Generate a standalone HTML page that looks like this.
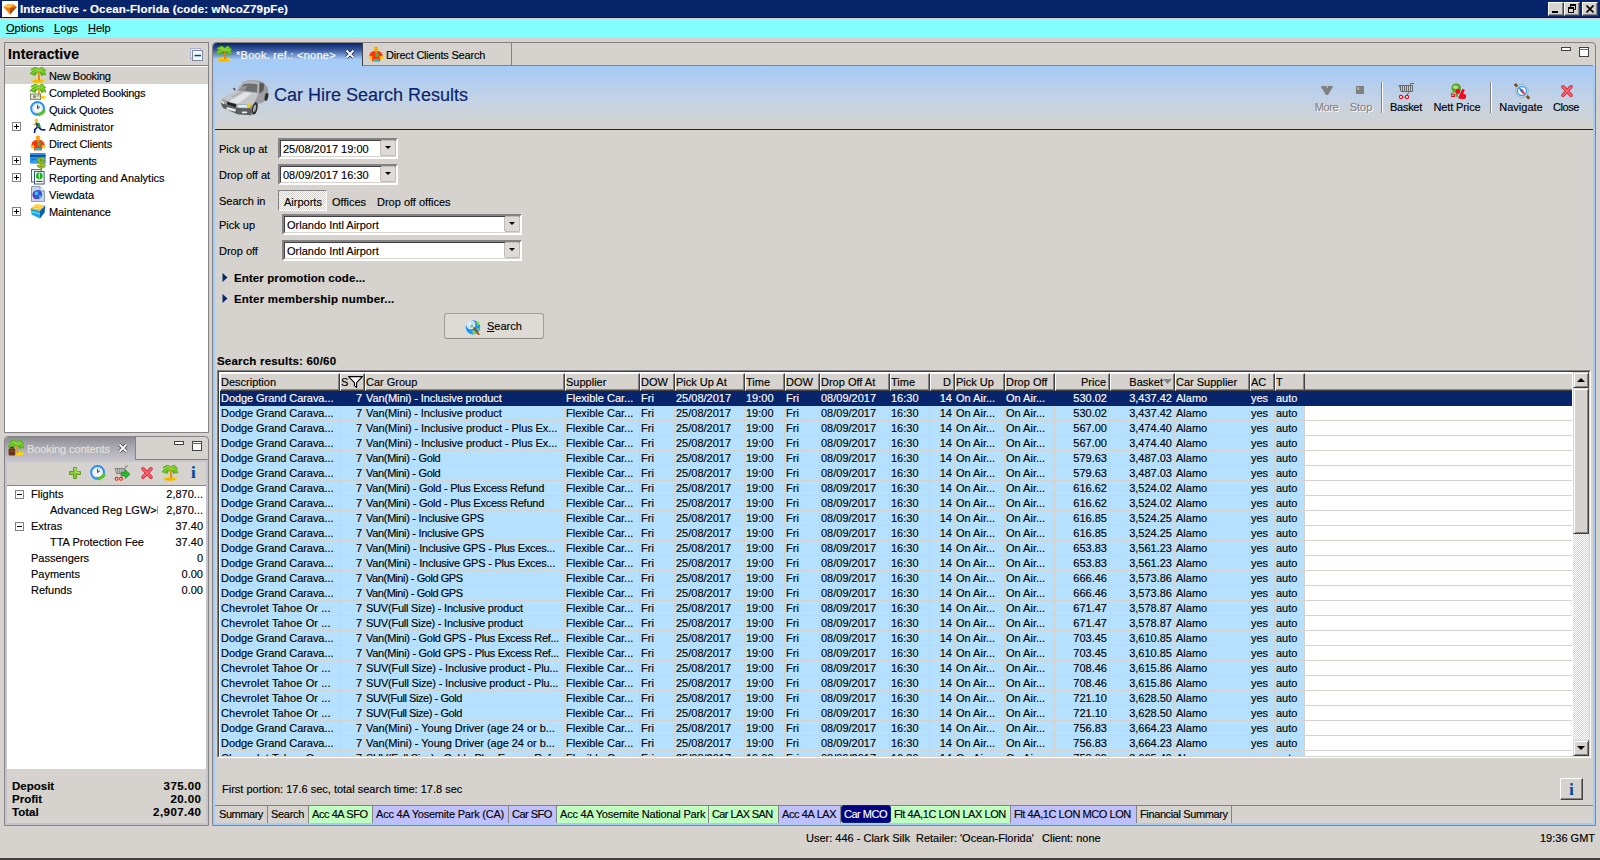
<!DOCTYPE html>
<html><head><meta charset="utf-8"><title>Interactive - Ocean-Florida</title>
<style>
*{box-sizing:border-box;margin:0;padding:0}
html,body{width:1600px;height:860px;overflow:hidden}
body{background:#d6d3ce;font-family:"Liberation Sans",sans-serif;font-size:11px;color:#000;-webkit-text-stroke:.15px;position:relative;line-height:13px}
div,span{position:absolute}
div,span{white-space:nowrap}
#titlebar{left:0;top:0;width:1600px;height:18px;background:#08246b;border-bottom:1px solid #00145a;color:#fff;font-weight:bold;font-size:11.5px;letter-spacing:.16px}
#menubar{left:0;top:19px;width:1600px;height:18px;background:#84ffff}
u{text-decoration:underline}
/* left top panel */
#lp{left:4px;top:42px;width:205px;height:391px;border:1px solid #848284;background:#fff}
#lphead{left:0;top:0;width:203px;height:23px;background:#d6d3ce;border-bottom:1px solid #848284}
.ti{left:0;width:203px;height:17px}
/* bottom left panel */
#bp{left:4px;top:436px;width:205px;height:390px;border:1px solid #848284;border-radius:4px 4px 0 0;background:#d6d3ce}
/* main */
#mp{left:212px;top:42px;width:1384px;height:784px;border:1px solid #848284;border-radius:4px 4px 0 0;background:#d6d3ce}
/* table */
#tbl{left:217px;top:370px;width:1374px;height:388px;border:1px solid;border-color:#848284 #fff #fff #848284;background:#fff;overflow:hidden}
#tin{left:0;top:0;width:1372px;height:386px;border:1px solid;border-color:#424142 #d6d3ce #d6d3ce #424142;overflow:hidden}
.th{top:-1px;height:18px;background:#d6d3ce;border:1px solid;border-color:#fff #424142 #424142 #fff;box-shadow:inset -1px -1px 0 #848284;padding:2px 2px 0 0;line-height:13px;overflow:hidden}
.th.r,.c.r{text-align:right;padding-right:3px}
.tr{left:0;width:1352px;height:15px;border-bottom:1px solid #d6d3ce;background:#fff}
.tr .c{top:0;height:14px;background:#b5e1ff;border-right:1px solid #d3d1cd;padding:0 2px 0 1px;line-height:14px;overflow:hidden}
.tr.sel{background:#08246b;border-bottom-color:#08246b}
.tr.sel .c{background:#08246b;color:#fff;border-right-color:#08246b}
#sb{left:1354px;top:0;width:16px;height:384px;background:repeating-conic-gradient(#fff 0% 25%,#d6d3ce 0% 50%) 0 0/2px 2px}
.sbb{left:0;width:16px;height:16px;background:#d6d3ce;border:1px solid;border-color:#d6d3ce #424142 #424142 #d6d3ce;box-shadow:inset 1px 1px 0 #fff,inset -1px -1px 0 #848284}
.sbb b{position:absolute;left:3px;border:4px solid transparent}
#thumb{left:0;top:16px;width:16px;height:146px;background:#d6d3ce;border:1px solid;border-color:#d6d3ce #424142 #424142 #d6d3ce;box-shadow:inset 1px 1px 0 #fff,inset -1px -1px 0 #848284}
i{position:absolute;display:block;font-style:normal}
svg.ic{position:absolute;width:16px;height:16px;top:0;overflow:visible}
.ti .tx{left:44px;top:3px}
.pm{left:7px;top:4px;width:9px;height:9px;border:1px solid #848284;background:#fff}
.pm:before{content:"";position:absolute;left:1px;top:3px;width:5px;height:1px;background:#000}
.pm.p:after{content:"";position:absolute;left:3px;top:1px;width:1px;height:5px;background:#000}
#bptab{left:0;top:0;width:131px;height:23px;border-radius:4px 0 0 0;background:linear-gradient(#8c8b95,#a5a3ab 35%,#c5c3cb);border-right:1px solid #848284}
#bptool{left:2px;top:25px;width:199px;height:24px;background:#d6d3ce;border-bottom:1px solid #848284}
#bptree{left:2px;top:49px;width:199px;height:283px;background:#fff}
.bi{left:0;width:199px;height:16px}
.bi span{top:1px}
.v{right:3px;left:auto !important;text-align:right}
#bptot{left:0;top:333px;width:203px;height:55px;font-weight:bold;font-size:11.5px}
#bptot .v{right:7px;letter-spacing:.45px;margin-right:-.45px}
#bptot span{margin-top:1px}
#tab1{left:0;top:0;width:150px;height:23px;border-radius:4px 0 0 0;background:linear-gradient(#08246b,#37579d 30%,#a5cbf7 72%);border-right:1px solid #424142}
#tab2{left:150px;top:0;width:149px;height:23px;border-right:1px solid #848284}
#frame{left:0;top:23px;width:1382px;height:759px;border:2px solid #a5cbf7;border-top:0}
#hdr{left:2px;top:23px;width:1378px;height:63px;background:linear-gradient(#a5cbf7,#c4d2e4 55%,#d6d3ce)}
.tb{top:16px;height:34px}
.tb span{left:0;right:0;top:19px;text-align:center}
.tb.dis span{color:#848284;text-shadow:1px 1px 0 #fff}
.sep{top:16px;width:2px;height:31px;background:#848284;border-right:1px solid #fff}
.lb{left:6px}
.fld{border:2px solid;border-color:#848284 #fff #fff #848284;background:#fff}
.fld:before{content:"";position:absolute;left:0;top:0;right:0;bottom:0;border:1px solid;border-color:#424142 #d6d3ce #d6d3ce #424142}
.fld span{left:3px;top:3px}
.dd{right:0;top:0;width:16px;height:16px;background:#dedad6;border:1px solid #c0bcb6;border-radius:2px}
.dd:after{content:"";position:absolute;left:4px;top:5px;border:3px solid transparent;border-top:3px solid #000;border-bottom:0}
#tog{left:65px;top:147px;width:49px;height:21px;background:repeating-conic-gradient(#fff 0% 25%,#d6d3ce 0% 50%) 0 0/2px 2px;border:1px solid;border-color:#848284 #fff #fff #848284}
#tog span{left:5px;top:5px}
.bl{font-weight:bold;font-size:11.5px;letter-spacing:.2px}
#sbtn{left:231px;top:270px;width:100px;height:26px;background:#dedad6;border:1px solid #a29e9a;border-bottom-color:#8e8a86;border-radius:3px}
#ibtn{left:1347px;top:735px;width:23px;height:22px;background:#d6d3ce;border:1px solid;border-color:#fff #424142 #424142 #fff;box-shadow:inset -1px -1px 0 #848284}
#ibtn span{left:0;right:0;top:2px;text-align:center;font-family:"Liberation Serif",serif;font-weight:bold;font-size:16px;line-height:18px;color:#00489c}
#btabs{left:0;top:763px;width:1383px;height:17px}
.bt{top:0;height:17px;padding:2px 0 0 3px;overflow:hidden;border-right:1px solid #848284;line-height:13px}
.bt.g{background:#c0ffc0}.bt.p{background:#c0c0ff}
.bt.s{background:#000080;color:#fff;top:-1px;height:18px;padding-top:2px;border-radius:3px;border:1px solid #08246b;padding-left:2px}
.wb{top:2px;width:16px;height:14px;background:#d6d3ce;border:1px solid;border-color:#fff #424142 #424142 #fff;box-shadow:inset -1px -1px 0 #848284}
#bpframe{left:0;top:23px;width:203px;height:365px;border:2px solid #c5c3cb}
.tb svg.d1{top:1px}

</style></head><body >
<svg width="0" height="0" style="position:absolute"><defs>
<symbol id="i-palm" viewBox="0 0 16 16">
 <ellipse cx="8" cy="13.6" rx="7" ry="2" fill="#ffd400"/><ellipse cx="8" cy="14.3" rx="5.5" ry="1.2" fill="#f4b400"/>
 <path d="M8 4C7.6 7 8.4 10 8.3 13L10 13C9.8 10 9.2 7 9.6 4z" fill="#e89400"/><path d="M8.3 7h1.2M8.4 9.5h1.3M8.5 11.7h1.4" stroke="#c06000" stroke-width=".8"/>
 <g fill="none" stroke-linecap="round"><path d="M8.6 3.6Q4 2.4 .8 6.8M8.6 3.6Q5 .6 1.8 2.6M8.6 3.6Q7 .4 4.6 .8M8.6 3.6Q10.4 .4 12.6 1M8.6 3.6Q12.6 1 15 3.6M8.6 3.6Q13.6 3 15.2 7.6M8.6 3.6Q6 4.6 4.8 8M8.6 3.6Q11 4.6 12 8.2M8.6 3.6Q5 3 2.8 7.4M8.6 3.6Q12 3.4 13.6 7" stroke="#58b218" stroke-width="1.9"/><path d="M8.6 3.4Q5 1.4 2.4 3M8.6 3.4Q7.4 1.2 5.2 1.2M8.6 3.4Q10.4 1.2 12.4 1.6M8.6 3.4Q12 2 14.4 4M8.4 3.8Q5 3.6 2 6.4M8.8 3.8Q12.4 3.8 14.4 6.6" stroke="#9ade3c" stroke-width="1"/></g>
</symbol>
<symbol id="i-palmcash" viewBox="0 0 16 16">
 <ellipse cx="12" cy="13.2" rx="3.6" ry="1.6" fill="#ffd400"/>
 <path d="M8 4C7.6 6 8.2 8 8.3 10L10 10C9.8 8 9.2 6 9.6 4z" fill="#e89400"/>
 <g fill="none" stroke-linecap="round"><path d="M8.6 3.6Q4 2.4 .8 6.8M8.6 3.6Q5 .6 1.8 2.6M8.6 3.6Q7 .4 4.6 .8M8.6 3.6Q10.4 .4 12.6 1M8.6 3.6Q12.6 1 15 3.6M8.6 3.6Q13.6 3 15.2 7.6M8.6 3.6Q6 4.6 4.8 8M8.6 3.6Q11 4.6 12 8.2M8.6 3.6Q5 3 2.8 7.4M8.6 3.6Q12 3.4 13.6 7" stroke="#58b218" stroke-width="1.9"/><path d="M8.6 3.4Q5 1.4 2.4 3M8.6 3.4Q7.4 1.2 5.2 1.2M8.6 3.4Q10.4 1.2 12.4 1.6M8.6 3.4Q12 2 14.4 4M8.4 3.8Q5 3.6 2 6.4M8.8 3.8Q12.4 3.8 14.4 6.6" stroke="#9ade3c" stroke-width="1"/></g>
 <rect x=".5" y="10" width="10" height="5.4" fill="#e4e6cc" stroke="#7c8068"/><circle cx="4.6" cy="12.7" r="1.6" fill="#8c9078"/><rect x="7" y="11.4" width="2.4" height="1" fill="#8c9078"/>
</symbol>
<symbol id="i-clock" viewBox="0 0 16 16">
 <circle cx="7.6" cy="7.4" r="6.4" fill="#fff" stroke="#1e90ff" stroke-width="2"/><circle cx="7.6" cy="7.4" r="5" fill="#f4f6fa" stroke="#a0b4d0" stroke-width=".6"/>
 <path d="M7.6 3.8V7.6L10 5.6" stroke="#303848" stroke-width="1" fill="none"/>
 <path d="M5.4 11.6C8 12.8 12 11.6 13.4 8L15.6 9.6C15 13 12 14.6 9.4 14.4L9.6 16 5.4 11.6z" fill="#52c02a"/>
</symbol>
<symbol id="i-run" viewBox="0 0 16 16">
 <circle cx="6.4" cy="2.4" r="1.8" fill="#f4c430"/>
 <path d="M5.6 4.2L9.6 5 11 9.4 8.6 10 6 8z" fill="#3c9c30"/><path d="M5.4 4.6L7.6 5.2 8.2 9 6 8z" fill="#28389c"/>
 <path d="M3.4 6.6L6 6" stroke="#f0a020" stroke-width="1.4"/>
 <path d="M7.4 9L4.8 11.6 4.6 15M8.6 9.4L11.4 11.6 15.4 11.8" stroke="#101c8c" stroke-width="1.7" fill="none"/>
</symbol>
<symbol id="i-client" viewBox="0 0 16 16">
 <ellipse cx="8" cy="2.8" rx="2.4" ry="2.4" fill="#ffd020"/><path d="M5.8 2.2Q8 -.6 10.2 2.2" fill="#ff9a00"/><path d="M6.4 3.4h3.2" stroke="#e07000" stroke-width=".8"/>
 <ellipse cx="8" cy="9.6" rx="6.6" ry="4.8" fill="#ff3208"/><rect x="4" y="11" width="8" height="4.4" fill="#ff3208"/>
 <circle cx="2.6" cy="11.6" r="1.9" fill="#ffc414"/><circle cx="13.4" cy="11.6" r="1.9" fill="#ffc414"/>
 <rect x="7.4" y="7.4" width="3.4" height="2.4" fill="#30c848"/><path d="M7 10.2h2.4v1.6" stroke="#30c848" stroke-width="1" fill="none"/><rect x="5" y="13" width="6" height="1.9" fill="#18c8c0"/>
 <path d="M6.6 5.4L8 6.6 9.4 5.4" stroke="#ffd020" stroke-width="1" fill="none"/>
</symbol>
<symbol id="i-pay" viewBox="0 0 16 16" overflow="visible">
 <rect x="0" y="1" width="15.6" height="10.6" rx="1" fill="#2a90e8"/><rect x="0" y="3" width="15.6" height="1.8" fill="#0c4890"/><path d="M0 11.6L8 5.4H15.6V11.6z" fill="#48a8f4" opacity=".6"/><rect x="1.6" y="6.8" width="4.4" height="1.1" fill="#1870c8"/>
 <text x="11.2" y="15.6" font-family="Liberation Sans,sans-serif" font-weight="bold" font-size="15" text-anchor="middle" fill="#a8d020" stroke="#6c9c10" stroke-width=".7">$</text>
</symbol>
<symbol id="i-report" viewBox="0 0 16 16">
 <rect x="1.5" y=".6" width="9.6" height="12.4" fill="#f0f4f8" stroke="#4a6880"/><rect x="4.5" y="2.6" width="9.6" height="12.4" fill="#fff" stroke="#385870"/>
 <circle cx="9.3" cy="7" r="3.4" fill="#18b418"/><path d="M9.3 4.6v3.2" stroke="#fff" stroke-width="1.2"/><circle cx="9.3" cy="9" r=".7" fill="#fff"/>
 <path d="M6.2 12.4h6.4" stroke="#502020" stroke-width="1"/>
</symbol>
<symbol id="i-globe" viewBox="0 0 16 16">
 <path d="M1.5 .6H10L14.4 5V15.4H1.5z" fill="#ccd8ec" stroke="#8898b4"/><path d="M10 .6V5h4.4" fill="#eef2fa" stroke="#8898b4"/>
 <circle cx="7.6" cy="8.6" r="4.6" fill="#3a50e0"/><path d="M5 6.4C6.4 5 8 5.6 8 7 9 8 7.4 9.4 6.4 9 5.6 10 4 8 5 6.4zM9 9.6C10.6 8.6 11.6 9.6 10.6 11.4 9.6 12.6 8.4 11 9 9.6z" fill="#30d8c8"/><path d="M3.6 6.6A4.6 4.6 0 0 0 6 13" stroke="#7020a0" stroke-width="1.2" fill="none"/>
</symbol>
<symbol id="i-box" viewBox="0 0 16 16">
 <path d="M.6 5.6L6.6 1 15.4 2.6 9.6 8z" fill="#ffb400"/><path d="M2.6 4.8L11.6 6.4M4.6 3.2L13.4 4.8M6.4 1.8L14.8 3.4" stroke="#fff088" stroke-width=".9"/>
 <path d="M.6 5.6L9.6 8 10 15.6 1.6 11.6z" fill="#1ea0e0"/><path d="M9.6 8L15.4 2.6 14.6 9.6 10 15.6z" fill="#0c60b0"/>
 <path d="M1.4 8.6L9.6 11" stroke="#60e8f8" stroke-width="1.2"/>
</symbol>
<symbol id="i-palmbag" viewBox="0 0 16 16">
 <ellipse cx="11.6" cy="13.6" rx="4" ry="1.8" fill="#ffd400"/>
 <path d="M8.4 4C8 7 8.6 10 8.6 13L10.2 13C10 10 9.6 7 10 4z" fill="#e89400"/>
 <g fill="none" stroke-linecap="round"><path d="M8.6 3.6Q4 2.4 .8 6.8M8.6 3.6Q5 .6 1.8 2.6M8.6 3.6Q7 .4 4.6 .8M8.6 3.6Q10.4 .4 12.6 1M8.6 3.6Q12.6 1 15 3.6M8.6 3.6Q13.6 3 15.2 7.6M8.6 3.6Q6 4.6 4.8 8M8.6 3.6Q11 4.6 12 8.2M8.6 3.6Q5 3 2.8 7.4M8.6 3.6Q12 3.4 13.6 7" stroke="#58b218" stroke-width="1.9"/><path d="M8.6 3.4Q5 1.4 2.4 3M8.6 3.4Q7.4 1.2 5.2 1.2M8.6 3.4Q10.4 1.2 12.4 1.6M8.6 3.4Q12 2 14.4 4M8.4 3.8Q5 3.6 2 6.4M8.8 3.8Q12.4 3.8 14.4 6.6" stroke="#9ade3c" stroke-width="1"/></g>
 <rect x=".6" y="8.6" width="6.6" height="6.8" rx="1" fill="#6a3418"/><path d="M2.6 8.6V7.4h2.6v1.2" stroke="#3a1c0c" fill="none" stroke-width=".9"/><rect x=".6" y="10.4" width="6.6" height="1" fill="#8a4c28"/>
</symbol>
<symbol id="i-plus" viewBox="0 0 16 16">
 <path d="M6.5 2.5h3v4h4v3h-4v4h-3v-4h-4v-3h4z" fill="#8cc63c" stroke="#5e9a22" stroke-width="1" stroke-linejoin="round"/><path d="M7.2 3.4h1.6v3.8h3.8" stroke="#c8ec80" stroke-width=".9" fill="none"/>
</symbol>
<symbol id="i-x" viewBox="0 0 16 16">
 <path d="M4 3.8L12 12.2M12 3.8L4 12.2" stroke="#d8283a" stroke-width="3.6" stroke-linecap="round"/><path d="M4 3.8L12 12.2M12 3.8L4 12.2" stroke="#f46872" stroke-width="1.8" stroke-linecap="round"/>
</symbol>
<symbol id="i-cart" viewBox="0 0 16 16" overflow="visible">
 <path d="M12.5 3.5V1.5H16M.5 3.5H15M1.5 3.5L3 9.5H14.5V3.5M11.5 9.5L9.5 12V13" stroke="#6a6a6a" fill="none" stroke-width="1"/>
 <path d="M2.5 3.5v3.6M4.5 3.5v6M6.5 3.5v6M8.5 3.5v6M10.5 3.5v6M12.5 3.5v6" stroke="#6a6a6a" stroke-width="1"/>
 <path d="M4.6 15H7.4" stroke="#5a9a9a" stroke-width="1"/>
 <circle cx="3" cy="15" r="1.6" fill="#f4ffff" stroke="#f00010" stroke-width="1.1"/><circle cx="9" cy="15" r="1.6" fill="#f4ffff" stroke="#f00010" stroke-width="1.1"/>
</symbol>
<symbol id="i-cartgo" viewBox="0 0 16 16">
 <path d="M.6 3.6H11L12 1h2" stroke="#808080" fill="none" stroke-width="1"/><path d="M1.4 3.6L2.4 8.6H10L11 3.6" stroke="#808080" fill="none" stroke-width="1"/>
 <path d="M3.6 3.6v5M5.4 3.6v5M7.2 3.6v5M9 3.6v5" stroke="#808080" stroke-width=".9"/>
 <circle cx="2.6" cy="13.8" r="1.4" fill="#fff" stroke="#f01010" stroke-width="1.1"/><circle cx="7" cy="13.8" r="1.4" fill="#fff" stroke="#f01010" stroke-width="1.1"/>
 <path d="M7 7.4h4.4V4.8L16 9.2 11.4 13.6V11H7z" fill="#20c020" stroke="#108010" stroke-width=".6"/>
</symbol>
<symbol id="i-nett" viewBox="0 0 16 16" overflow="visible">
 <circle cx="6.2" cy="5.2" r="4.8" fill="#5aa428"/><ellipse cx="5.6" cy="4.2" rx="2.8" ry="1.8" fill="#b4dc8c"/><path d="M5.4 8L8.6 9 7.6 14.6 5.6 13z" fill="#5aa428"/>
 <path d="M.6 10.4L4 9.8" stroke="#5aa428" stroke-width="1.2"/>
 <rect x="1" y="11.2" width="4" height="2.8" fill="#f00818"/><rect x="1.8" y="12.1" width="2" height=".9" fill="#ffd8d8"/>
 <circle cx="8" cy="8.4" r="2.3" fill="#f00818"/><circle cx="13.4" cy="13.4" r="2.7" fill="#f00818"/><path d="M13.6 6.4L9.4 15.6" stroke="#f00818" stroke-width="2.8"/>
 <circle cx="8" cy="8.4" r=".7" fill="#c04040"/><circle cx="13.4" cy="13.4" r=".8" fill="#c04040"/>
</symbol>
<symbol id="i-compass" viewBox="0 0 16 16" overflow="visible">
 <path d="M.8 1L3.4 3.6M12.8 13L15.2 15.6" stroke="#7a4a20" stroke-width="2.6"/>
 <circle cx="8" cy="8" r="6.3" fill="#f0f4f8" stroke="#98a8b8" stroke-width="1"/><circle cx="8" cy="8" r="4.6" fill="#f8fcff" stroke="#38a4f0" stroke-width="1.5"/>
 <path d="M4.6 4.2L9.4 7 7 9.2z" fill="#2868d8"/><path d="M11.6 12L7 9.2 9.4 7z" fill="#f02828"/>
</symbol>
<symbol id="i-more" viewBox="0 0 16 16"><path d="M2.4 4H13.6V5.6L9 13H7L2.4 5.6z" fill="#808080"/><rect x="7.6" y="4.4" width="1.4" height="1.2" fill="#d8d8d8"/></symbol>
<symbol id="i-stop" viewBox="0 0 16 16"><rect x="4" y="4" width="8" height="8" fill="#808080"/><rect x="5.6" y="5.4" width="1.2" height="2.4" fill="#d8d8d8"/></symbol>
<symbol id="i-search" viewBox="0 0 16 16">
 <circle cx="8" cy="8.4" r="7.2" fill="#1e96f4"/><path d="M11 2.4L13.6 3 14.6 6 12.6 6.6zM7 12L10 11.4 11 14.4 8 15.4zM12 9L14.6 9.6 13 12z" fill="#7ce030"/>
 <circle cx="5.8" cy="5.8" r="3.9" fill="#bfe4ee" stroke="#e4e8f0" stroke-width="1.3"/><circle cx="5.2" cy="5.4" r="1.5" fill="#fff"/><circle cx="6.6" cy="6.8" r="1.6" fill="#58b070" opacity=".6"/>
 <path d="M9 9L13.8 15.4" stroke="#a05010" stroke-width="1.7" stroke-linecap="round"/>
</symbol>
<symbol id="i-car" viewBox="0 0 48 36">
 <path d="M16 11L22 2.4C28 .4 36 .8 41 2.4L46 8 46.6 15 42 22 36 24 33 33 30 34.6 17 33.6 3 27.6 .6 22.6 2 19z" fill="#9c9ea0"/>
 <path d="M2 19L16 11 37 13.6 32 24.6 17 23.6z" fill="#c4c6c8"/><path d="M8 21.6L24 12.4 31 13.2 17 23.6z" fill="#e2e4e6"/><path d="M11 16.6L19 11.6 22.6 12 12.6 18z" fill="#b0b2b4"/>
 <path d="M16 11L22 2.4C28 1 34 1.6 38 3L37 13.6z" fill="#b4b6b8"/><path d="M18 10.6L22.6 4.6C27 3.6 32 4 36 5L35.4 12.6z" fill="#6c6e70"/><path d="M18 10.6L21 6.6 26 6.2 24 11.2z" fill="#909294"/>
 <path d="M38 3L42.6 4.6 41.6 11 37.6 13.6z" fill="#58595b"/>
 <path d="M.6 22.6L17 27.6 30.6 28 30 34.6 17 33.6 3 27.6z" fill="#5a5c5e"/><rect x="6.6" y="26.6" width="9" height="2.6" fill="#e8e8e8" transform="rotate(14 6.6 26.6)"/><rect x="21" y="31" width="5" height="1.6" fill="#f0f0f0"/>
 <path d="M7 21.6L15.6 24 15 27 6.6 24z" fill="#202224"/>
 <path d="M17 24.4L26.6 24.6 26 27.4 17 27z" fill="#d4ecff"/><path d="M26.6 24.2L29.6 24 29 27.2 26 27.4z" fill="#f4d000"/><path d="M1.4 20.6L4 21.6 4 24 1 22.6z" fill="#cfe4f4"/><path d="M1.2 20L2.4 20.4 2.2 22 1 21.6z" fill="#f4d000"/>
 <ellipse cx="33.4" cy="28" rx="2.6" ry="6" fill="#2c2e30" transform="rotate(12 33.4 28)"/><ellipse cx="33.2" cy="28" rx="1.3" ry="3.6" fill="#a8aaac" transform="rotate(12 33.2 28)"/>
 <ellipse cx="44.6" cy="17" rx="1.6" ry="4" fill="#2c2e30" transform="rotate(12 44.6 17)"/>
 <path d="M13 8.6L14.6 10.4" stroke="#303234" stroke-width="1.4"/>
</symbol>
<symbol id="i-gem" viewBox="0 0 16 16"><rect width="16" height="16" fill="#fff"/><path d="M1.4 6L5 3.6H11.6L14.8 6 8 13.4z" fill="#f08000"/><path d="M1.4 6L5 3.6H11.6L8 7z" fill="#ffc040"/><path d="M8 7L14.8 6 8 13.4z" fill="#b84800"/></symbol>
</defs></svg>

<div id="titlebar"><svg class="ic" style="left:2px;top:1px"><use href="#i-gem"/></svg><span style="left:20px;top:3px">Interactive - Ocean-Florida (code: wNcoZ79pFe)</span>
 <i class="wb" style="left:1548px"><i style="left:3px;top:8px;width:6px;height:2px;background:#000"></i></i>
 <i class="wb" style="left:1564px"><svg style="position:absolute;left:3px;top:1px" width="9" height="10" viewBox="0 0 9 10"><path d="M2.5 3V1H7.5V5.5H6" fill="none" stroke="#000"/><path d="M2 1H8" stroke="#000" stroke-width="2"/><rect x=".5" y="4" width="5" height="4.5" fill="none" stroke="#000"/><path d="M0 4H6" stroke="#000" stroke-width="2"/></svg></i>
 <i class="wb" style="left:1582px"><svg style="position:absolute;left:3px;top:2px" width="8" height="8" viewBox="0 0 8 8"><path d="M.5 .5L7.5 7.5M7.5 .5L.5 7.5" stroke="#000" stroke-width="1.6"/></svg></i>
</div>
<div id="menubar" ><span style="left:6px;top:3px"><u>O</u>ptions</span><span style="left:54px;top:3px"><u>L</u>ogs</span><span style="left:88px;top:3px"><u>H</u>elp</span></div>

<div id="lp">
 <div id="lphead"><span style="left:3px;top:4px;font-size:14px;font-weight:bold;line-height:15px;letter-spacing:.1px">Interactive</span>
  <svg style="position:absolute;left:185px;top:5px" width="14" height="14" viewBox="0 0 14 14"><rect x=".5" y=".5" width="10" height="10" fill="#d8f0ff" stroke="#a8b4d0"/><rect x="2.5" y="2.5" width="10" height="10" fill="#f0faff" stroke="#8088a8"/><rect x="4.5" y="6.8" width="6.5" height="1.5" fill="#104080"/></svg>
 </div>
 <div class="ti" style="top:24px;background:#d6d3ce"><svg class="ic" style="left:25px"><use href="#i-palm"/></svg><span class="tx" style="letter-spacing:-0.3px">New Booking</span></div>
 <div class="ti" style="top:41px"><svg class="ic" style="left:25px"><use href="#i-palmcash"/></svg><span class="tx" style="letter-spacing:-0.3px">Completed Bookings</span></div>
 <div class="ti" style="top:58px"><svg class="ic" style="left:25px"><use href="#i-clock"/></svg><span class="tx" style="letter-spacing:-0.2px">Quick Quotes</span></div>
 <div class="ti" style="top:75px"><i class="pm p"></i><svg class="ic" style="left:25px"><use href="#i-run"/></svg><span class="tx">Administrator</span></div>
 <div class="ti" style="top:92px"><svg class="ic" style="left:25px"><use href="#i-client"/></svg><span class="tx" style="letter-spacing:-0.17px">Direct Clients</span></div>
 <div class="ti" style="top:109px"><i class="pm p"></i><svg class="ic" style="left:25px"><use href="#i-pay"/></svg><span class="tx" style="letter-spacing:-0.15px">Payments</span></div>
 <div class="ti" style="top:126px"><i class="pm p"></i><svg class="ic" style="left:25px"><use href="#i-report"/></svg><span class="tx">Reporting and Analytics</span></div>
 <div class="ti" style="top:143px"><svg class="ic" style="left:25px"><use href="#i-globe"/></svg><span class="tx">Viewdata</span></div>
 <div class="ti" style="top:160px"><i class="pm p"></i><svg class="ic" style="left:25px"><use href="#i-box"/></svg><span class="tx" style="letter-spacing:-0.1px">Maintenance</span></div>
</div>

<div id="bp">
 <div id="bptab"><svg class="ic" style="left:3px;top:3px"><use href="#i-palmbag"/></svg><span style="left:22px;top:6px;color:#e4e2dc;letter-spacing:-.1px">Booking contents</span>
  <svg style="position:absolute;left:113px;top:6px" width="10" height="10" viewBox="0 0 10 10"><path d="M1.5 1.5L8.5 8.5M8.5 1.5L1.5 8.5" stroke="#424142" stroke-width="3.4"/><path d="M1.5 1.5L8.5 8.5M8.5 1.5L1.5 8.5" stroke="#fff" stroke-width="1.8"/></svg></div>
 <div style="left:131px;top:22px;width:72px;height:1px;background:#848284"></div>
 <svg style="position:absolute;left:168px;top:3px" width="30" height="14" viewBox="0 0 30 14"><rect x="1.5" y="1.5" width="9" height="3" fill="#fff" stroke="#424142"/><rect x="19.5" y="1.5" width="9" height="9" fill="#fff" stroke="#424142"/><path d="M19 3.5H29" stroke="#6a6a6a"/></svg>
 <div id="bpframe"></div>
 <div id="bptool">
  <svg class="ic" style="left:60px;top:3px"><use href="#i-plus"/></svg>
  <svg class="ic" style="left:83px;top:3px"><use href="#i-clock"/></svg>
  <svg class="ic" style="left:107px;top:3px"><use href="#i-cartgo"/></svg>
  <svg class="ic" style="left:132px;top:3px"><use href="#i-x"/></svg>
  <svg class="ic" style="left:155px;top:3px"><use href="#i-palm"/></svg>
  <span style="left:184px;top:2px;font-family:'Liberation Serif',serif;font-weight:bold;font-size:17px;line-height:18px;color:#00489c">i</span>
 </div>
 <div id="bptree">
  <div class="bi" style="top:1px"><i class="pm m" style="left:8px;top:3px"></i><span style="left:24px">Flights</span><span class="v">2,870...</span></div>
  <div class="bi" style="top:17px"><span style="left:43px;width:108px;overflow:hidden">Advanced Reg LGW&gt;MCO</span><span class="v">2,870...</span></div>
  <div class="bi" style="top:33px"><i class="pm m" style="left:8px;top:3px"></i><span style="left:24px">Extras</span><span class="v">37.40</span></div>
  <div class="bi" style="top:49px"><span style="left:43px">TTA Protection Fee</span><span class="v">37.40</span></div>
  <div class="bi" style="top:65px"><span style="left:24px">Passengers</span><span class="v">0</span></div>
  <div class="bi" style="top:81px"><span style="left:24px">Payments</span><span class="v">0.00</span></div>
  <div class="bi" style="top:97px"><span style="left:24px">Refunds</span><span class="v">0.00</span></div>
 </div>
 <div id="bptot">
  <span style="left:7px;top:9px">Deposit</span><span class="v" style="top:9px">375.00</span>
  <span style="left:7px;top:22px">Profit</span><span class="v" style="top:22px">20.00</span>
  <span style="left:7px;top:35px">Total</span><span class="v" style="top:35px">2,907.40</span>
 </div>
</div>

<div id="mp">
 <!-- tab strip -->
 <div id="tab1"><svg class="ic" style="left:3px;top:3px"><use href="#i-palm"/></svg><span style="left:23px;top:6px;color:#fff;letter-spacing:.27px">*Book. ref.: &lt;none&gt;</span>
  <svg style="position:absolute;left:132px;top:6px" width="10" height="10" viewBox="0 0 10 10"><path d="M1.5 1.5L8.5 8.5M8.5 1.5L1.5 8.5" stroke="#202840" stroke-width="3.4"/><path d="M1.5 1.5L8.5 8.5M8.5 1.5L1.5 8.5" stroke="#fff" stroke-width="1.8"/></svg></div>
 <div id="tab2"><svg class="ic" style="left:5px;top:3px"><use href="#i-client"/></svg><span style="left:23px;top:6px;letter-spacing:-.2px">Direct Clients Search</span></div>
 <div style="left:150px;top:22px;width:1230px;height:1px;background:#848284"></div>
 <svg style="position:absolute;left:1347px;top:3px" width="30" height="14" viewBox="0 0 30 14"><rect x="1.5" y="1.5" width="9" height="3" fill="#fff" stroke="#424142"/><rect x="19.5" y="1.5" width="9" height="9" fill="#fff" stroke="#424142"/><path d="M19 3.5H29" stroke="#6a6a6a"/></svg>
 <!-- blue frame -->
 <div id="frame"></div>
 <div id="hdr">
  <svg style="position:absolute;left:5px;top:13px" width="50" height="38" viewBox="0 0 48 36"><use href="#i-car"/></svg>
  <span style="left:59px;top:19px;font-size:18px;line-height:21px;color:#08246b">Car Hire Search Results</span>
  <div class="tb dis" style="left:1094px;width:35px"><svg class="ic" style="left:10px"><use href="#i-more"/></svg><span style="letter-spacing:-0.4px">More</span></div>
  <div class="tb dis" style="left:1129px;width:34px"><svg class="ic" style="left:8px"><use href="#i-stop"/></svg><span>Stop</span></div>
  <i class="sep" style="left:1166px"></i>
  <div class="tb" style="left:1169px;width:44px"><svg class="ic" style="left:14px"><use href="#i-cart"/></svg><span style="letter-spacing:-0.3px">Basket</span></div>
  <div class="tb" style="left:1214px;width:56px"><svg class="ic d1" style="left:21px"><use href="#i-nett"/></svg><span style="letter-spacing:-0.13px">Nett Price</span></div>
  <i class="sep" style="left:1275px"></i>
  <div class="tb" style="left:1280px;width:52px"><svg class="ic d1" style="left:19px"><use href="#i-compass"/></svg><span>Navigate</span></div>
  <div class="tb" style="left:1332px;width:38px"><svg class="ic d1" style="left:12px"><use href="#i-x"/></svg><span style="letter-spacing:-0.45px">Close</span></div>
 </div>
 <div style="left:2px;top:86px;width:1378px;height:1px;background:#08246b"></div>
 <!-- form -->
 <span class="lb" style="top:100px">Pick up at</span>
 <div class="fld" style="left:65px;top:95px;width:120px;height:21px"><span>25/08/2017 19:00</span><i class="dd"></i></div>
 <span class="lb" style="top:126px">Drop off at</span>
 <div class="fld" style="left:65px;top:121px;width:120px;height:21px"><span>08/09/2017 16:30</span><i class="dd"></i></div>
 <span class="lb" style="top:152px">Search in</span>
 <div id="tog"><span>Airports</span></div>
 <span style="left:119px;top:153px">Offices</span><span style="left:164px;top:153px">Drop off offices</span>
 <span class="lb" style="top:176px">Pick up</span>
 <div class="fld" style="left:69px;top:171px;width:240px;height:21px"><span>Orlando Intl Airport</span><i class="dd"></i></div>
 <span class="lb" style="top:202px">Drop off</span>
 <div class="fld" style="left:69px;top:197px;width:240px;height:21px"><span>Orlando Intl Airport</span><i class="dd"></i></div>
 <svg style="position:absolute;left:9px;top:230px" width="6" height="9" viewBox="0 0 6 9"><path d="M.5 0L5.5 4.5L.5 9z" fill="#08246b"/></svg>
 <span class="bl" style="left:21px;top:229px;letter-spacing:.1px">Enter promotion code...</span>
 <svg style="position:absolute;left:9px;top:251px" width="6" height="9" viewBox="0 0 6 9"><path d="M.5 0L5.5 4.5L.5 9z" fill="#08246b"/></svg>
 <span class="bl" style="left:21px;top:250px">Enter membership number...</span>
 <div id="sbtn"><svg class="ic" style="left:20px;top:5px"><use href="#i-search"/></svg><span style="left:42px;top:6px"><u>S</u>earch</span></div>
 <span class="bl" style="left:4px;top:312px">Search results: 60/60</span>
 <span style="left:9px;top:740px">First portion: 17.6 sec, total search time: 17.8 sec</span>
 <div id="ibtn"><span>i</span></div>
 <!-- bottom tabs -->
 <div style="left:2px;top:762px;width:1378px;height:1px;background:#848284"></div>
 <div id="btabs">
  <span class="bt" style="left:3px;width:52px;letter-spacing:-0.45px">Summary</span>
  <span class="bt" style="left:55px;width:41px;letter-spacing:-0.3px">Search</span>
  <span class="bt g" style="left:96px;width:64px;letter-spacing:-0.43px">Acc 4A SFO</span>
  <span class="bt p" style="left:160px;width:136px;letter-spacing:-0.21px">Acc 4A Yosemite Park (CA)</span>
  <span class="bt p" style="left:296px;width:48px;letter-spacing:-0.5px">Car SFO</span>
  <span class="bt g" style="left:344px;width:152px;letter-spacing:-0.2px">Acc 4A Yosemite National Park</span>
  <span class="bt g" style="left:496px;width:70px;letter-spacing:-0.6px">Car LAX SAN</span>
  <span class="bt p" style="left:566px;width:62px;letter-spacing:-0.38px">Acc 4A LAX</span>
  <span class="bt s" style="left:628px;width:50px;letter-spacing:-0.49px">Car MCO</span>
  <span class="bt g" style="left:678px;width:120px;letter-spacing:-0.44px">Flt 4A,1C LON LAX LON</span>
  <span class="bt p" style="left:798px;width:126px;letter-spacing:-0.43px">Flt 4A,1C LON MCO LON</span>
  <span class="bt" style="left:924px;width:95px;letter-spacing:-0.38px">Financial Summary</span>
 </div>
</div>
<span style="left:806px;top:832px">User: 446 - Clark Silk</span>
<span style="left:916px;top:832px">Retailer: 'Ocean-Florida'</span>
<span style="left:1042px;top:832px">Client: none</span>
<span style="left:1540px;top:832px">19:36 GMT</span>
<div style="left:0;top:858px;width:1600px;height:2px;background:#424142"></div>

<div id="tbl" ><div id="tin" >
<div id="thead" style="left:1px;top:1px;width:1352px;height:18px;background:#d6d3ce;border-top:1px solid #fff;border-bottom:1px solid #424142;box-shadow:inset 0 -1px 0 #848284"><span class="th l" style="left:0px;width:120px">Description</span><span class="th l" style="left:120px;width:25px">S<svg style="position:absolute;left:7px;top:2px" width="16" height="12" viewBox="0 0 16 12"><path d="M.6 .6H14.4L8.6 6.6V11.4L6.4 9.6V6.6z" fill="#fff" stroke="#000" stroke-width="1.1" stroke-linejoin="round"/></svg></span><span class="th l" style="left:145px;width:200px">Car Group</span><span class="th l" style="left:345px;width:75px">Supplier</span><span class="th l" style="left:420px;width:35px">DOW</span><span class="th l" style="left:455px;width:70px">Pick Up At</span><span class="th l" style="left:525px;width:40px">Time</span><span class="th l" style="left:565px;width:35px">DOW</span><span class="th l" style="left:600px;width:70px">Drop Off At</span><span class="th l" style="left:670px;width:40px">Time</span><span class="th r" style="left:710px;width:25px">D</span><span class="th l" style="left:735px;width:50px">Pick Up</span><span class="th l" style="left:785px;width:50px">Drop Off</span><span class="th r" style="left:835px;width:55px">Price</span><span class="th r" style="left:890px;width:65px;padding-right:11px">Basket<svg style="position:absolute;right:2px;top:5px" width="9" height="5" viewBox="0 0 9 5"><path d="M0 0H9L4.5 5z" fill="#848284"/></svg></span><span class="th l" style="left:955px;width:75px">Car Supplier</span><span class="th l" style="left:1030px;width:25px">AC</span><span class="th l" style="left:1055px;width:30px">T</span></div>
<div id="tbody" style="left:1px;top:19px;width:1352px;height:400px">
<div class="tr sel" style="top:0px"><span class="c l" style="left:0px;width:120px;letter-spacing:-0.064px">Dodge Grand Carava...</span><span class="c r" style="left:120px;width:25px">7</span><span class="c l" style="left:145px;width:200px;letter-spacing:-0.103px">Van(Mini) - Inclusive product</span><span class="c l" style="left:345px;width:75px">Flexible Car...</span><span class="c l" style="left:420px;width:35px">Fri</span><span class="c l" style="left:455px;width:70px">25/08/2017</span><span class="c l" style="left:525px;width:40px">19:00</span><span class="c l" style="left:565px;width:35px">Fri</span><span class="c l" style="left:600px;width:70px">08/09/2017</span><span class="c l" style="left:670px;width:40px">16:30</span><span class="c r" style="left:710px;width:25px">14</span><span class="c l" style="left:735px;width:50px">On Air...</span><span class="c l" style="left:785px;width:50px">On Air...</span><span class="c r" style="left:835px;width:55px">530.02</span><span class="c r" style="left:890px;width:65px">3,437.42</span><span class="c l" style="left:955px;width:75px">Alamo</span><span class="c l" style="left:1030px;width:25px">yes</span><span class="c l" style="left:1055px;width:30px">auto</span></div>
<div class="tr" style="top:15px"><span class="c l" style="left:0px;width:120px;letter-spacing:-0.064px">Dodge Grand Carava...</span><span class="c r" style="left:120px;width:25px">7</span><span class="c l" style="left:145px;width:200px;letter-spacing:-0.103px">Van(Mini) - Inclusive product</span><span class="c l" style="left:345px;width:75px">Flexible Car...</span><span class="c l" style="left:420px;width:35px">Fri</span><span class="c l" style="left:455px;width:70px">25/08/2017</span><span class="c l" style="left:525px;width:40px">19:00</span><span class="c l" style="left:565px;width:35px">Fri</span><span class="c l" style="left:600px;width:70px">08/09/2017</span><span class="c l" style="left:670px;width:40px">16:30</span><span class="c r" style="left:710px;width:25px">14</span><span class="c l" style="left:735px;width:50px">On Air...</span><span class="c l" style="left:785px;width:50px">On Air...</span><span class="c r" style="left:835px;width:55px">530.02</span><span class="c r" style="left:890px;width:65px">3,437.42</span><span class="c l" style="left:955px;width:75px">Alamo</span><span class="c l" style="left:1030px;width:25px">yes</span><span class="c l" style="left:1055px;width:30px">auto</span></div>
<div class="tr" style="top:30px"><span class="c l" style="left:0px;width:120px;letter-spacing:-0.064px">Dodge Grand Carava...</span><span class="c r" style="left:120px;width:25px">7</span><span class="c l" style="left:145px;width:200px;letter-spacing:-0.086px">Van(Mini) - Inclusive product - Plus Ex...</span><span class="c l" style="left:345px;width:75px">Flexible Car...</span><span class="c l" style="left:420px;width:35px">Fri</span><span class="c l" style="left:455px;width:70px">25/08/2017</span><span class="c l" style="left:525px;width:40px">19:00</span><span class="c l" style="left:565px;width:35px">Fri</span><span class="c l" style="left:600px;width:70px">08/09/2017</span><span class="c l" style="left:670px;width:40px">16:30</span><span class="c r" style="left:710px;width:25px">14</span><span class="c l" style="left:735px;width:50px">On Air...</span><span class="c l" style="left:785px;width:50px">On Air...</span><span class="c r" style="left:835px;width:55px">567.00</span><span class="c r" style="left:890px;width:65px">3,474.40</span><span class="c l" style="left:955px;width:75px">Alamo</span><span class="c l" style="left:1030px;width:25px">yes</span><span class="c l" style="left:1055px;width:30px">auto</span></div>
<div class="tr" style="top:45px"><span class="c l" style="left:0px;width:120px;letter-spacing:-0.064px">Dodge Grand Carava...</span><span class="c r" style="left:120px;width:25px">7</span><span class="c l" style="left:145px;width:200px;letter-spacing:-0.086px">Van(Mini) - Inclusive product - Plus Ex...</span><span class="c l" style="left:345px;width:75px">Flexible Car...</span><span class="c l" style="left:420px;width:35px">Fri</span><span class="c l" style="left:455px;width:70px">25/08/2017</span><span class="c l" style="left:525px;width:40px">19:00</span><span class="c l" style="left:565px;width:35px">Fri</span><span class="c l" style="left:600px;width:70px">08/09/2017</span><span class="c l" style="left:670px;width:40px">16:30</span><span class="c r" style="left:710px;width:25px">14</span><span class="c l" style="left:735px;width:50px">On Air...</span><span class="c l" style="left:785px;width:50px">On Air...</span><span class="c r" style="left:835px;width:55px">567.00</span><span class="c r" style="left:890px;width:65px">3,474.40</span><span class="c l" style="left:955px;width:75px">Alamo</span><span class="c l" style="left:1030px;width:25px">yes</span><span class="c l" style="left:1055px;width:30px">auto</span></div>
<div class="tr" style="top:60px"><span class="c l" style="left:0px;width:120px;letter-spacing:-0.064px">Dodge Grand Carava...</span><span class="c r" style="left:120px;width:25px">7</span><span class="c l" style="left:145px;width:200px;letter-spacing:-0.304px">Van(Mini) - Gold</span><span class="c l" style="left:345px;width:75px">Flexible Car...</span><span class="c l" style="left:420px;width:35px">Fri</span><span class="c l" style="left:455px;width:70px">25/08/2017</span><span class="c l" style="left:525px;width:40px">19:00</span><span class="c l" style="left:565px;width:35px">Fri</span><span class="c l" style="left:600px;width:70px">08/09/2017</span><span class="c l" style="left:670px;width:40px">16:30</span><span class="c r" style="left:710px;width:25px">14</span><span class="c l" style="left:735px;width:50px">On Air...</span><span class="c l" style="left:785px;width:50px">On Air...</span><span class="c r" style="left:835px;width:55px">579.63</span><span class="c r" style="left:890px;width:65px">3,487.03</span><span class="c l" style="left:955px;width:75px">Alamo</span><span class="c l" style="left:1030px;width:25px">yes</span><span class="c l" style="left:1055px;width:30px">auto</span></div>
<div class="tr" style="top:75px"><span class="c l" style="left:0px;width:120px;letter-spacing:-0.064px">Dodge Grand Carava...</span><span class="c r" style="left:120px;width:25px">7</span><span class="c l" style="left:145px;width:200px;letter-spacing:-0.304px">Van(Mini) - Gold</span><span class="c l" style="left:345px;width:75px">Flexible Car...</span><span class="c l" style="left:420px;width:35px">Fri</span><span class="c l" style="left:455px;width:70px">25/08/2017</span><span class="c l" style="left:525px;width:40px">19:00</span><span class="c l" style="left:565px;width:35px">Fri</span><span class="c l" style="left:600px;width:70px">08/09/2017</span><span class="c l" style="left:670px;width:40px">16:30</span><span class="c r" style="left:710px;width:25px">14</span><span class="c l" style="left:735px;width:50px">On Air...</span><span class="c l" style="left:785px;width:50px">On Air...</span><span class="c r" style="left:835px;width:55px">579.63</span><span class="c r" style="left:890px;width:65px">3,487.03</span><span class="c l" style="left:955px;width:75px">Alamo</span><span class="c l" style="left:1030px;width:25px">yes</span><span class="c l" style="left:1055px;width:30px">auto</span></div>
<div class="tr" style="top:90px"><span class="c l" style="left:0px;width:120px;letter-spacing:-0.064px">Dodge Grand Carava...</span><span class="c r" style="left:120px;width:25px">7</span><span class="c l" style="left:145px;width:200px;letter-spacing:-0.256px">Van(Mini) - Gold - Plus Excess Refund</span><span class="c l" style="left:345px;width:75px">Flexible Car...</span><span class="c l" style="left:420px;width:35px">Fri</span><span class="c l" style="left:455px;width:70px">25/08/2017</span><span class="c l" style="left:525px;width:40px">19:00</span><span class="c l" style="left:565px;width:35px">Fri</span><span class="c l" style="left:600px;width:70px">08/09/2017</span><span class="c l" style="left:670px;width:40px">16:30</span><span class="c r" style="left:710px;width:25px">14</span><span class="c l" style="left:735px;width:50px">On Air...</span><span class="c l" style="left:785px;width:50px">On Air...</span><span class="c r" style="left:835px;width:55px">616.62</span><span class="c r" style="left:890px;width:65px">3,524.02</span><span class="c l" style="left:955px;width:75px">Alamo</span><span class="c l" style="left:1030px;width:25px">yes</span><span class="c l" style="left:1055px;width:30px">auto</span></div>
<div class="tr" style="top:105px"><span class="c l" style="left:0px;width:120px;letter-spacing:-0.064px">Dodge Grand Carava...</span><span class="c r" style="left:120px;width:25px">7</span><span class="c l" style="left:145px;width:200px;letter-spacing:-0.256px">Van(Mini) - Gold - Plus Excess Refund</span><span class="c l" style="left:345px;width:75px">Flexible Car...</span><span class="c l" style="left:420px;width:35px">Fri</span><span class="c l" style="left:455px;width:70px">25/08/2017</span><span class="c l" style="left:525px;width:40px">19:00</span><span class="c l" style="left:565px;width:35px">Fri</span><span class="c l" style="left:600px;width:70px">08/09/2017</span><span class="c l" style="left:670px;width:40px">16:30</span><span class="c r" style="left:710px;width:25px">14</span><span class="c l" style="left:735px;width:50px">On Air...</span><span class="c l" style="left:785px;width:50px">On Air...</span><span class="c r" style="left:835px;width:55px">616.62</span><span class="c r" style="left:890px;width:65px">3,524.02</span><span class="c l" style="left:955px;width:75px">Alamo</span><span class="c l" style="left:1030px;width:25px">yes</span><span class="c l" style="left:1055px;width:30px">auto</span></div>
<div class="tr" style="top:120px"><span class="c l" style="left:0px;width:120px;letter-spacing:-0.064px">Dodge Grand Carava...</span><span class="c r" style="left:120px;width:25px">7</span><span class="c l" style="left:145px;width:200px;letter-spacing:-0.296px">Van(Mini) - Inclusive GPS</span><span class="c l" style="left:345px;width:75px">Flexible Car...</span><span class="c l" style="left:420px;width:35px">Fri</span><span class="c l" style="left:455px;width:70px">25/08/2017</span><span class="c l" style="left:525px;width:40px">19:00</span><span class="c l" style="left:565px;width:35px">Fri</span><span class="c l" style="left:600px;width:70px">08/09/2017</span><span class="c l" style="left:670px;width:40px">16:30</span><span class="c r" style="left:710px;width:25px">14</span><span class="c l" style="left:735px;width:50px">On Air...</span><span class="c l" style="left:785px;width:50px">On Air...</span><span class="c r" style="left:835px;width:55px">616.85</span><span class="c r" style="left:890px;width:65px">3,524.25</span><span class="c l" style="left:955px;width:75px">Alamo</span><span class="c l" style="left:1030px;width:25px">yes</span><span class="c l" style="left:1055px;width:30px">auto</span></div>
<div class="tr" style="top:135px"><span class="c l" style="left:0px;width:120px;letter-spacing:-0.064px">Dodge Grand Carava...</span><span class="c r" style="left:120px;width:25px">7</span><span class="c l" style="left:145px;width:200px;letter-spacing:-0.296px">Van(Mini) - Inclusive GPS</span><span class="c l" style="left:345px;width:75px">Flexible Car...</span><span class="c l" style="left:420px;width:35px">Fri</span><span class="c l" style="left:455px;width:70px">25/08/2017</span><span class="c l" style="left:525px;width:40px">19:00</span><span class="c l" style="left:565px;width:35px">Fri</span><span class="c l" style="left:600px;width:70px">08/09/2017</span><span class="c l" style="left:670px;width:40px">16:30</span><span class="c r" style="left:710px;width:25px">14</span><span class="c l" style="left:735px;width:50px">On Air...</span><span class="c l" style="left:785px;width:50px">On Air...</span><span class="c r" style="left:835px;width:55px">616.85</span><span class="c r" style="left:890px;width:65px">3,524.25</span><span class="c l" style="left:955px;width:75px">Alamo</span><span class="c l" style="left:1030px;width:25px">yes</span><span class="c l" style="left:1055px;width:30px">auto</span></div>
<div class="tr" style="top:150px"><span class="c l" style="left:0px;width:120px;letter-spacing:-0.064px">Dodge Grand Carava...</span><span class="c r" style="left:120px;width:25px">7</span><span class="c l" style="left:145px;width:200px;letter-spacing:-0.231px">Van(Mini) - Inclusive GPS - Plus Exces...</span><span class="c l" style="left:345px;width:75px">Flexible Car...</span><span class="c l" style="left:420px;width:35px">Fri</span><span class="c l" style="left:455px;width:70px">25/08/2017</span><span class="c l" style="left:525px;width:40px">19:00</span><span class="c l" style="left:565px;width:35px">Fri</span><span class="c l" style="left:600px;width:70px">08/09/2017</span><span class="c l" style="left:670px;width:40px">16:30</span><span class="c r" style="left:710px;width:25px">14</span><span class="c l" style="left:735px;width:50px">On Air...</span><span class="c l" style="left:785px;width:50px">On Air...</span><span class="c r" style="left:835px;width:55px">653.83</span><span class="c r" style="left:890px;width:65px">3,561.23</span><span class="c l" style="left:955px;width:75px">Alamo</span><span class="c l" style="left:1030px;width:25px">yes</span><span class="c l" style="left:1055px;width:30px">auto</span></div>
<div class="tr" style="top:165px"><span class="c l" style="left:0px;width:120px;letter-spacing:-0.064px">Dodge Grand Carava...</span><span class="c r" style="left:120px;width:25px">7</span><span class="c l" style="left:145px;width:200px;letter-spacing:-0.231px">Van(Mini) - Inclusive GPS - Plus Exces...</span><span class="c l" style="left:345px;width:75px">Flexible Car...</span><span class="c l" style="left:420px;width:35px">Fri</span><span class="c l" style="left:455px;width:70px">25/08/2017</span><span class="c l" style="left:525px;width:40px">19:00</span><span class="c l" style="left:565px;width:35px">Fri</span><span class="c l" style="left:600px;width:70px">08/09/2017</span><span class="c l" style="left:670px;width:40px">16:30</span><span class="c r" style="left:710px;width:25px">14</span><span class="c l" style="left:735px;width:50px">On Air...</span><span class="c l" style="left:785px;width:50px">On Air...</span><span class="c r" style="left:835px;width:55px">653.83</span><span class="c r" style="left:890px;width:65px">3,561.23</span><span class="c l" style="left:955px;width:75px">Alamo</span><span class="c l" style="left:1030px;width:25px">yes</span><span class="c l" style="left:1055px;width:30px">auto</span></div>
<div class="tr" style="top:180px"><span class="c l" style="left:0px;width:120px;letter-spacing:-0.064px">Dodge Grand Carava...</span><span class="c r" style="left:120px;width:25px">7</span><span class="c l" style="left:145px;width:200px;letter-spacing:-0.448px">Van(Mini) - Gold GPS</span><span class="c l" style="left:345px;width:75px">Flexible Car...</span><span class="c l" style="left:420px;width:35px">Fri</span><span class="c l" style="left:455px;width:70px">25/08/2017</span><span class="c l" style="left:525px;width:40px">19:00</span><span class="c l" style="left:565px;width:35px">Fri</span><span class="c l" style="left:600px;width:70px">08/09/2017</span><span class="c l" style="left:670px;width:40px">16:30</span><span class="c r" style="left:710px;width:25px">14</span><span class="c l" style="left:735px;width:50px">On Air...</span><span class="c l" style="left:785px;width:50px">On Air...</span><span class="c r" style="left:835px;width:55px">666.46</span><span class="c r" style="left:890px;width:65px">3,573.86</span><span class="c l" style="left:955px;width:75px">Alamo</span><span class="c l" style="left:1030px;width:25px">yes</span><span class="c l" style="left:1055px;width:30px">auto</span></div>
<div class="tr" style="top:195px"><span class="c l" style="left:0px;width:120px;letter-spacing:-0.064px">Dodge Grand Carava...</span><span class="c r" style="left:120px;width:25px">7</span><span class="c l" style="left:145px;width:200px;letter-spacing:-0.448px">Van(Mini) - Gold GPS</span><span class="c l" style="left:345px;width:75px">Flexible Car...</span><span class="c l" style="left:420px;width:35px">Fri</span><span class="c l" style="left:455px;width:70px">25/08/2017</span><span class="c l" style="left:525px;width:40px">19:00</span><span class="c l" style="left:565px;width:35px">Fri</span><span class="c l" style="left:600px;width:70px">08/09/2017</span><span class="c l" style="left:670px;width:40px">16:30</span><span class="c r" style="left:710px;width:25px">14</span><span class="c l" style="left:735px;width:50px">On Air...</span><span class="c l" style="left:785px;width:50px">On Air...</span><span class="c r" style="left:835px;width:55px">666.46</span><span class="c r" style="left:890px;width:65px">3,573.86</span><span class="c l" style="left:955px;width:75px">Alamo</span><span class="c l" style="left:1030px;width:25px">yes</span><span class="c l" style="left:1055px;width:30px">auto</span></div>
<div class="tr" style="top:210px"><span class="c l" style="left:0px;width:120px;letter-spacing:0.104px">Chevrolet Tahoe Or ...</span><span class="c r" style="left:120px;width:25px">7</span><span class="c l" style="left:145px;width:200px;letter-spacing:-0.222px">SUV(Full Size) - Inclusive product</span><span class="c l" style="left:345px;width:75px">Flexible Car...</span><span class="c l" style="left:420px;width:35px">Fri</span><span class="c l" style="left:455px;width:70px">25/08/2017</span><span class="c l" style="left:525px;width:40px">19:00</span><span class="c l" style="left:565px;width:35px">Fri</span><span class="c l" style="left:600px;width:70px">08/09/2017</span><span class="c l" style="left:670px;width:40px">16:30</span><span class="c r" style="left:710px;width:25px">14</span><span class="c l" style="left:735px;width:50px">On Air...</span><span class="c l" style="left:785px;width:50px">On Air...</span><span class="c r" style="left:835px;width:55px">671.47</span><span class="c r" style="left:890px;width:65px">3,578.87</span><span class="c l" style="left:955px;width:75px">Alamo</span><span class="c l" style="left:1030px;width:25px">yes</span><span class="c l" style="left:1055px;width:30px">auto</span></div>
<div class="tr" style="top:225px"><span class="c l" style="left:0px;width:120px;letter-spacing:0.104px">Chevrolet Tahoe Or ...</span><span class="c r" style="left:120px;width:25px">7</span><span class="c l" style="left:145px;width:200px;letter-spacing:-0.222px">SUV(Full Size) - Inclusive product</span><span class="c l" style="left:345px;width:75px">Flexible Car...</span><span class="c l" style="left:420px;width:35px">Fri</span><span class="c l" style="left:455px;width:70px">25/08/2017</span><span class="c l" style="left:525px;width:40px">19:00</span><span class="c l" style="left:565px;width:35px">Fri</span><span class="c l" style="left:600px;width:70px">08/09/2017</span><span class="c l" style="left:670px;width:40px">16:30</span><span class="c r" style="left:710px;width:25px">14</span><span class="c l" style="left:735px;width:50px">On Air...</span><span class="c l" style="left:785px;width:50px">On Air...</span><span class="c r" style="left:835px;width:55px">671.47</span><span class="c r" style="left:890px;width:65px">3,578.87</span><span class="c l" style="left:955px;width:75px">Alamo</span><span class="c l" style="left:1030px;width:25px">yes</span><span class="c l" style="left:1055px;width:30px">auto</span></div>
<div class="tr" style="top:240px"><span class="c l" style="left:0px;width:120px;letter-spacing:-0.064px">Dodge Grand Carava...</span><span class="c r" style="left:120px;width:25px">7</span><span class="c l" style="left:145px;width:200px;letter-spacing:-0.287px">Van(Mini) - Gold GPS - Plus Excess Ref...</span><span class="c l" style="left:345px;width:75px">Flexible Car...</span><span class="c l" style="left:420px;width:35px">Fri</span><span class="c l" style="left:455px;width:70px">25/08/2017</span><span class="c l" style="left:525px;width:40px">19:00</span><span class="c l" style="left:565px;width:35px">Fri</span><span class="c l" style="left:600px;width:70px">08/09/2017</span><span class="c l" style="left:670px;width:40px">16:30</span><span class="c r" style="left:710px;width:25px">14</span><span class="c l" style="left:735px;width:50px">On Air...</span><span class="c l" style="left:785px;width:50px">On Air...</span><span class="c r" style="left:835px;width:55px">703.45</span><span class="c r" style="left:890px;width:65px">3,610.85</span><span class="c l" style="left:955px;width:75px">Alamo</span><span class="c l" style="left:1030px;width:25px">yes</span><span class="c l" style="left:1055px;width:30px">auto</span></div>
<div class="tr" style="top:255px"><span class="c l" style="left:0px;width:120px;letter-spacing:-0.064px">Dodge Grand Carava...</span><span class="c r" style="left:120px;width:25px">7</span><span class="c l" style="left:145px;width:200px;letter-spacing:-0.287px">Van(Mini) - Gold GPS - Plus Excess Ref...</span><span class="c l" style="left:345px;width:75px">Flexible Car...</span><span class="c l" style="left:420px;width:35px">Fri</span><span class="c l" style="left:455px;width:70px">25/08/2017</span><span class="c l" style="left:525px;width:40px">19:00</span><span class="c l" style="left:565px;width:35px">Fri</span><span class="c l" style="left:600px;width:70px">08/09/2017</span><span class="c l" style="left:670px;width:40px">16:30</span><span class="c r" style="left:710px;width:25px">14</span><span class="c l" style="left:735px;width:50px">On Air...</span><span class="c l" style="left:785px;width:50px">On Air...</span><span class="c r" style="left:835px;width:55px">703.45</span><span class="c r" style="left:890px;width:65px">3,610.85</span><span class="c l" style="left:955px;width:75px">Alamo</span><span class="c l" style="left:1030px;width:25px">yes</span><span class="c l" style="left:1055px;width:30px">auto</span></div>
<div class="tr" style="top:270px"><span class="c l" style="left:0px;width:120px;letter-spacing:0.104px">Chevrolet Tahoe Or ...</span><span class="c r" style="left:120px;width:25px">7</span><span class="c l" style="left:145px;width:200px;letter-spacing:-0.165px">SUV(Full Size) - Inclusive product - Plu...</span><span class="c l" style="left:345px;width:75px">Flexible Car...</span><span class="c l" style="left:420px;width:35px">Fri</span><span class="c l" style="left:455px;width:70px">25/08/2017</span><span class="c l" style="left:525px;width:40px">19:00</span><span class="c l" style="left:565px;width:35px">Fri</span><span class="c l" style="left:600px;width:70px">08/09/2017</span><span class="c l" style="left:670px;width:40px">16:30</span><span class="c r" style="left:710px;width:25px">14</span><span class="c l" style="left:735px;width:50px">On Air...</span><span class="c l" style="left:785px;width:50px">On Air...</span><span class="c r" style="left:835px;width:55px">708.46</span><span class="c r" style="left:890px;width:65px">3,615.86</span><span class="c l" style="left:955px;width:75px">Alamo</span><span class="c l" style="left:1030px;width:25px">yes</span><span class="c l" style="left:1055px;width:30px">auto</span></div>
<div class="tr" style="top:285px"><span class="c l" style="left:0px;width:120px;letter-spacing:0.104px">Chevrolet Tahoe Or ...</span><span class="c r" style="left:120px;width:25px">7</span><span class="c l" style="left:145px;width:200px;letter-spacing:-0.165px">SUV(Full Size) - Inclusive product - Plu...</span><span class="c l" style="left:345px;width:75px">Flexible Car...</span><span class="c l" style="left:420px;width:35px">Fri</span><span class="c l" style="left:455px;width:70px">25/08/2017</span><span class="c l" style="left:525px;width:40px">19:00</span><span class="c l" style="left:565px;width:35px">Fri</span><span class="c l" style="left:600px;width:70px">08/09/2017</span><span class="c l" style="left:670px;width:40px">16:30</span><span class="c r" style="left:710px;width:25px">14</span><span class="c l" style="left:735px;width:50px">On Air...</span><span class="c l" style="left:785px;width:50px">On Air...</span><span class="c r" style="left:835px;width:55px">708.46</span><span class="c r" style="left:890px;width:65px">3,615.86</span><span class="c l" style="left:955px;width:75px">Alamo</span><span class="c l" style="left:1030px;width:25px">yes</span><span class="c l" style="left:1055px;width:30px">auto</span></div>
<div class="tr" style="top:300px"><span class="c l" style="left:0px;width:120px;letter-spacing:0.104px">Chevrolet Tahoe Or ...</span><span class="c r" style="left:120px;width:25px">7</span><span class="c l" style="left:145px;width:200px;letter-spacing:-0.44px">SUV(Full Size) - Gold</span><span class="c l" style="left:345px;width:75px">Flexible Car...</span><span class="c l" style="left:420px;width:35px">Fri</span><span class="c l" style="left:455px;width:70px">25/08/2017</span><span class="c l" style="left:525px;width:40px">19:00</span><span class="c l" style="left:565px;width:35px">Fri</span><span class="c l" style="left:600px;width:70px">08/09/2017</span><span class="c l" style="left:670px;width:40px">16:30</span><span class="c r" style="left:710px;width:25px">14</span><span class="c l" style="left:735px;width:50px">On Air...</span><span class="c l" style="left:785px;width:50px">On Air...</span><span class="c r" style="left:835px;width:55px">721.10</span><span class="c r" style="left:890px;width:65px">3,628.50</span><span class="c l" style="left:955px;width:75px">Alamo</span><span class="c l" style="left:1030px;width:25px">yes</span><span class="c l" style="left:1055px;width:30px">auto</span></div>
<div class="tr" style="top:315px"><span class="c l" style="left:0px;width:120px;letter-spacing:0.104px">Chevrolet Tahoe Or ...</span><span class="c r" style="left:120px;width:25px">7</span><span class="c l" style="left:145px;width:200px;letter-spacing:-0.44px">SUV(Full Size) - Gold</span><span class="c l" style="left:345px;width:75px">Flexible Car...</span><span class="c l" style="left:420px;width:35px">Fri</span><span class="c l" style="left:455px;width:70px">25/08/2017</span><span class="c l" style="left:525px;width:40px">19:00</span><span class="c l" style="left:565px;width:35px">Fri</span><span class="c l" style="left:600px;width:70px">08/09/2017</span><span class="c l" style="left:670px;width:40px">16:30</span><span class="c r" style="left:710px;width:25px">14</span><span class="c l" style="left:735px;width:50px">On Air...</span><span class="c l" style="left:785px;width:50px">On Air...</span><span class="c r" style="left:835px;width:55px">721.10</span><span class="c r" style="left:890px;width:65px">3,628.50</span><span class="c l" style="left:955px;width:75px">Alamo</span><span class="c l" style="left:1030px;width:25px">yes</span><span class="c l" style="left:1055px;width:30px">auto</span></div>
<div class="tr" style="top:330px"><span class="c l" style="left:0px;width:120px;letter-spacing:-0.064px">Dodge Grand Carava...</span><span class="c r" style="left:120px;width:25px">7</span><span class="c l" style="left:145px;width:200px;letter-spacing:-0.045px">Van(Mini) - Young Driver (age 24 or b...</span><span class="c l" style="left:345px;width:75px">Flexible Car...</span><span class="c l" style="left:420px;width:35px">Fri</span><span class="c l" style="left:455px;width:70px">25/08/2017</span><span class="c l" style="left:525px;width:40px">19:00</span><span class="c l" style="left:565px;width:35px">Fri</span><span class="c l" style="left:600px;width:70px">08/09/2017</span><span class="c l" style="left:670px;width:40px">16:30</span><span class="c r" style="left:710px;width:25px">14</span><span class="c l" style="left:735px;width:50px">On Air...</span><span class="c l" style="left:785px;width:50px">On Air...</span><span class="c r" style="left:835px;width:55px">756.83</span><span class="c r" style="left:890px;width:65px">3,664.23</span><span class="c l" style="left:955px;width:75px">Alamo</span><span class="c l" style="left:1030px;width:25px">yes</span><span class="c l" style="left:1055px;width:30px">auto</span></div>
<div class="tr" style="top:345px"><span class="c l" style="left:0px;width:120px;letter-spacing:-0.064px">Dodge Grand Carava...</span><span class="c r" style="left:120px;width:25px">7</span><span class="c l" style="left:145px;width:200px;letter-spacing:-0.045px">Van(Mini) - Young Driver (age 24 or b...</span><span class="c l" style="left:345px;width:75px">Flexible Car...</span><span class="c l" style="left:420px;width:35px">Fri</span><span class="c l" style="left:455px;width:70px">25/08/2017</span><span class="c l" style="left:525px;width:40px">19:00</span><span class="c l" style="left:565px;width:35px">Fri</span><span class="c l" style="left:600px;width:70px">08/09/2017</span><span class="c l" style="left:670px;width:40px">16:30</span><span class="c r" style="left:710px;width:25px">14</span><span class="c l" style="left:735px;width:50px">On Air...</span><span class="c l" style="left:785px;width:50px">On Air...</span><span class="c r" style="left:835px;width:55px">756.83</span><span class="c r" style="left:890px;width:65px">3,664.23</span><span class="c l" style="left:955px;width:75px">Alamo</span><span class="c l" style="left:1030px;width:25px">yes</span><span class="c l" style="left:1055px;width:30px">auto</span></div>
<div class="tr" style="top:360px"><span class="c l" style="left:0px;width:120px;letter-spacing:0.104px">Chevrolet Tahoe Or ...</span><span class="c r" style="left:120px;width:25px">7</span><span class="c l" style="left:145px;width:200px;letter-spacing:-0.266px">SUV(Full Size) - Gold - Plus Excess Ref...</span><span class="c l" style="left:345px;width:75px">Flexible Car...</span><span class="c l" style="left:420px;width:35px">Fri</span><span class="c l" style="left:455px;width:70px">25/08/2017</span><span class="c l" style="left:525px;width:40px">19:00</span><span class="c l" style="left:565px;width:35px">Fri</span><span class="c l" style="left:600px;width:70px">08/09/2017</span><span class="c l" style="left:670px;width:40px">16:30</span><span class="c r" style="left:710px;width:25px">14</span><span class="c l" style="left:735px;width:50px">On Air...</span><span class="c l" style="left:785px;width:50px">On Air...</span><span class="c r" style="left:835px;width:55px">758.09</span><span class="c r" style="left:890px;width:65px">3,665.49</span><span class="c l" style="left:955px;width:75px">Alamo</span><span class="c l" style="left:1030px;width:25px">yes</span><span class="c l" style="left:1055px;width:30px">auto</span></div>
</div>
<div id="sb"><i class="sbb" style="top:0"><b style="border-bottom:4px solid #000;border-top:0;top:5px"></b></i><i id="thumb"></i><i class="sbb" style="bottom:0"><b style="border-top:4px solid #000;border-bottom:0;top:5px"></b></i></div>
</div></div>
</body></html>
